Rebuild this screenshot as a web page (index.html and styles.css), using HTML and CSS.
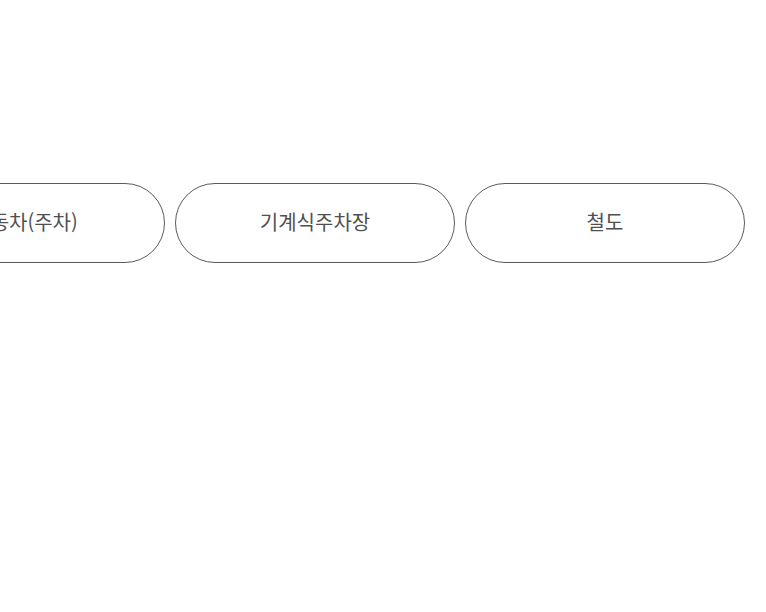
FILE: index.html
```html
<!DOCTYPE html>
<html lang="ko">
<head>
<meta charset="utf-8">
<link rel="stylesheet" href="styles.css">
</head>
<body>
<div class="viewport">
  <div class="track">
    <button class="chip">자동차(주차)</button>
    <button class="chip">기계식주차장</button>
    <button class="chip">철도</button>
  </div>
</div>
</body>
</html>
```
FILE: styles.css
```css
html, body {
  margin: 0;
  padding: 0;
  background: #fff;
}
.viewport {
  width: 766px;
  height: 612px;
  overflow: hidden;
  padding-top: 183px;
  box-sizing: border-box;
}
.track {
  display: flex;
  gap: 10px;
  margin-left: -115px;
}
.chip {
  flex: 0 0 280px;
  height: 80px;
  box-sizing: border-box;
  border: 1px solid #5a5a5a;
  border-radius: 40px;
  background: #fff;
  color: #505050;
  font-family: "Noto Sans CJK KR", "Noto Sans", sans-serif;
  font-size: 20px;
  letter-spacing: 0;
  padding: 0 0 4px;
  display: flex;
  align-items: center;
  justify-content: center;
}
```
